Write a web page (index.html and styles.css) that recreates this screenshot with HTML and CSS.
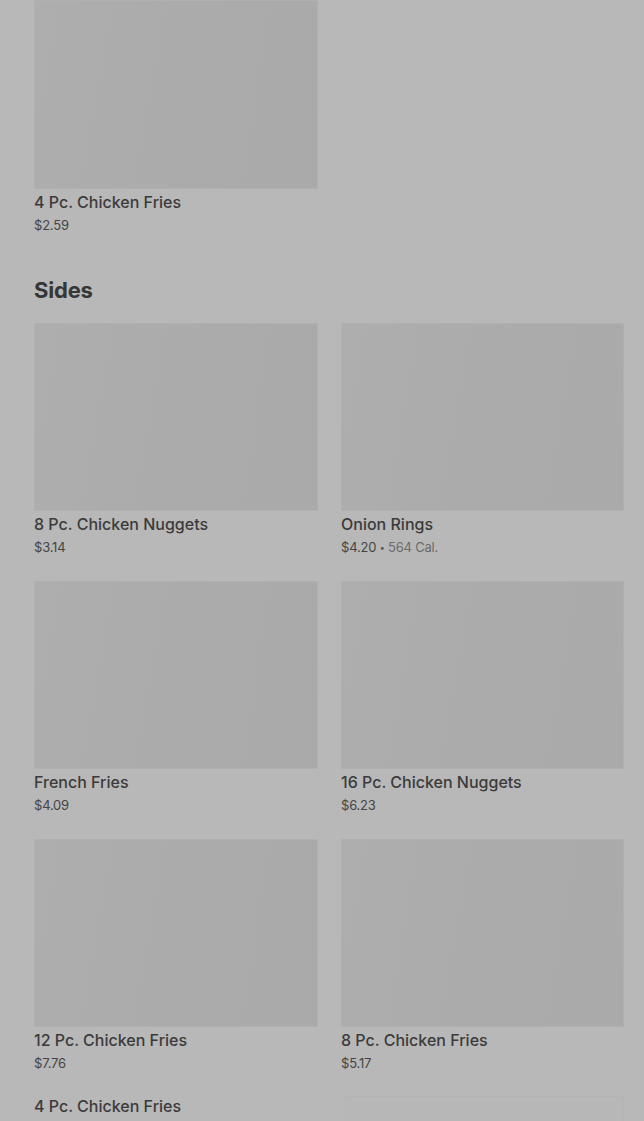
FILE: index.html
```html
<!DOCTYPE html>
<html>
<head>
<meta charset="utf-8">
<link rel="stylesheet" href="styles.css">
</head>
<body>
<main class="page">
  <section class="section first">
    <div class="grid">
      <div class="card">
        <div class="thumb top"></div>
        <div class="name">4 Pc. Chicken Fries</div>
        <div class="meta">$2.59</div>
      </div>
    </div>
  </section>
  <section class="section">
    <h2 class="heading">Sides</h2>
    <div class="grid">
      <div class="card">
        <div class="thumb"></div>
        <div class="name">8 Pc. Chicken Nuggets</div>
        <div class="meta">$3.14</div>
      </div>
      <div class="card">
        <div class="thumb"></div>
        <div class="name">Onion Rings</div>
        <div class="meta">$4.20 <span class="dot">•</span> <span class="cal">564 Cal.</span></div>
      </div>
      <div class="card">
        <div class="thumb"></div>
        <div class="name">French Fries</div>
        <div class="meta">$4.09</div>
      </div>
      <div class="card">
        <div class="thumb"></div>
        <div class="name">16 Pc. Chicken Nuggets</div>
        <div class="meta">$6.23</div>
      </div>
      <div class="card">
        <div class="thumb"></div>
        <div class="name">12 Pc. Chicken Fries</div>
        <div class="meta">$7.76</div>
      </div>
      <div class="card">
        <div class="thumb"></div>
        <div class="name">8 Pc. Chicken Fries</div>
        <div class="meta">$5.17</div>
      </div>
      <div class="card noimg">
        <div class="name">4 Pc. Chicken Fries</div>
        <div class="meta">$2.59</div>
      </div>
      <div class="card">
        <div class="thumb faint"></div>
      </div>
    </div>
  </section>
</main>
</body>
</html>
```
FILE: styles.css
```css
html, body {
  margin: 0;
  padding: 0;
  background: #b8b8b8;
  height: 1121px;
  overflow: hidden;
}
body {
  font-family: Inter, "Liberation Sans", sans-serif;
  color: #3a3a3a;
}
.page {
  padding: 0 20px 0 34px;
}
.section.first {
  margin-bottom: 42px;
}
.heading {
  margin: 0 0 19px 0;
  font-size: 22px;
  line-height: 28px;
  font-weight: 700;
  color: #363636;
  letter-spacing: -0.2px;
}
.grid {
  display: grid;
  grid-template-columns: 284px 283px;
  column-gap: 23px;
  row-gap: 25px;
  align-items: start;
}
.card {
  display: flex;
  flex-direction: column;
}
.thumb {
  height: 188px;
  background: linear-gradient(100deg, #aeaeae 0%, #ababab 50%, #aaaaaa 100%);
  box-shadow: inset 0 0 0 1px #b0b0b0;
}
.thumb.top {
  height: 189px;
}
.thumb.faint {
  margin-top: -1px;
  margin-left: 4px;
  background: #b7b7b7;
  box-shadow: inset 0 0 0 1px #b4b4b4;
}
.name {
  margin-top: 3px;
  height: 20px;
  font-size: 16px;
  line-height: 20px;
  font-weight: 500;
  color: #3b3b3b;
  white-space: nowrap;
}
.noimg .name {
  margin-top: -1px;
}
.meta {
  margin-top: 4px;
  height: 18px;
  font-size: 13px;
  line-height: 18px;
  color: #454545;
  letter-spacing: -0.2px;
  white-space: nowrap;
}
.dot {
  font-size: 9px;
  line-height: 1;
  vertical-align: 1px;
  color: #555;
}
.cal {
  color: #6c6c6c;
}
```
